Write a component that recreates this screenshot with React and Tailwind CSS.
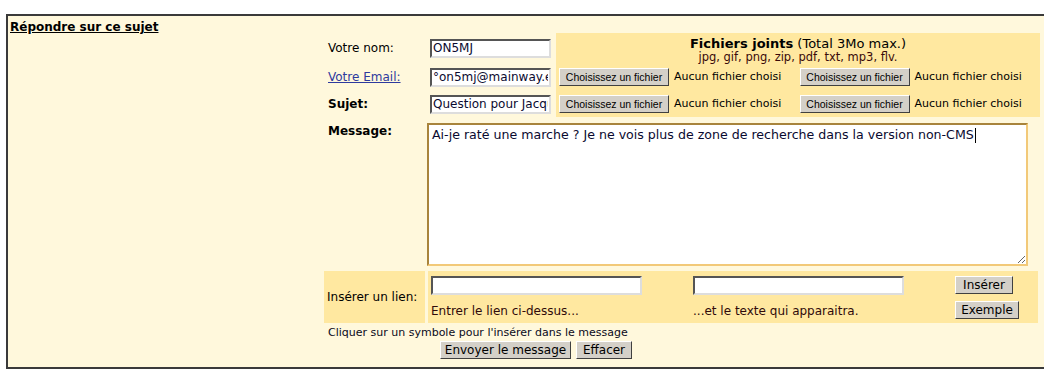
import { useState } from "react";

const fileRows = [0, 1];

function Btn({ children, className = "" }) {
  return (
    <button
      type="button"
      className={`flex h-[18px] items-center justify-center border border-t-white border-l-white border-b-[#404040] border-r-[#404040] bg-[#d4d0c8] text-[12px] leading-none text-black ${className}`}
    >
      {children}
    </button>
  );
}

function FileInput() {
  return (
    <div className="flex w-[241px] items-center gap-[5px]">
      <button
        type="button"
        className="flex h-[18px] w-[110px] items-center justify-center border border-t-white border-l-white border-b-[#404040] border-r-[#404040] bg-[#d4d0c8] font-['Liberation_Sans',Arial,sans-serif] text-[10.5px] leading-none text-black"
      >
        Choisissez un fichier
      </button>
      <span className="text-[11px] text-black">Aucun fichier choisi</span>
    </div>
  );
}

function TextBox({ value, className = "" }) {
  return (
    <input
      type="text"
      defaultValue={value}
      className={`border-2 border-t-[#555] border-l-[#555] border-b-[#ddd] border-r-[#ddd] bg-white px-[1px] text-[12px] text-[#0a0a30] outline-none ${className}`}
    />
  );
}

export default function App() {
  const [message] = useState(
    "Ai-je raté une marche ? Je ne vois plus de zone de recherche dans la version non-CMS"
  );

  return (
    <div className="h-[378px] w-[1044px] overflow-hidden bg-white pt-[14px] font-['DejaVu_Sans',Verdana,sans-serif] text-black">
      <div className="ml-[6px] h-[355px] w-[1060px] border-2 border-[#3a3a3a] bg-[#fff8dc] pl-[2px] pt-[5px]">
        <h2 className="text-[12px] leading-[12px] font-bold underline">Répondre sur ce sujet</h2>

        <div className="ml-[314px] w-[716px]">
          {/* identity + attachments */}
          <div className="flex">
            <div className="w-[232px]">
              <div className="flex h-[30px] items-center">
                <span className="w-[106px] pl-[4px] text-[12px]">Votre nom:</span>
                <TextBox value="ON5MJ" className="h-[19px] w-[121px]" />
              </div>
              <div className="flex h-[28px] items-center">
                <a href="#" className="w-[106px] pl-[4px] text-[12px] text-[#2e3a9e] underline">
                  Votre Email:
                </a>
                <TextBox value="°on5mj@mainway.eu" className="h-[19px] w-[121px]" />
              </div>
              <div className="flex h-[26px] items-center">
                <span className="w-[106px] pl-[4px] text-[12px] font-bold">Sujet:</span>
                <TextBox value="Question pour Jacques" className="h-[19px] w-[121px]" />
              </div>
            </div>

            <div className="h-[84px] w-[484px] bg-[#ffe8a0]">
              <div className="flex h-[30px] flex-col items-center pt-[3px]">
                <p className="text-[13px] leading-[15px]">
                  <span className="font-bold">Fichiers joints</span> (Total 3Mo max.)
                </p>
                <p className="text-[11.5px] leading-[12px] text-[#3a0a0a]">
                  jpg, gif, png, zip, pdf, txt, mp3, flv.
                </p>
              </div>
              {fileRows.map((row) => (
                <div
                  key={row}
                  className={`flex items-center pl-[3px] ${row === 0 ? "h-[28px]" : "h-[26px]"}`}
                >
                  <FileInput />
                  <FileInput />
                </div>
              ))}
            </div>
          </div>

          {/* message */}
          <div className="mt-[3px] flex h-[148px]">
            <span className="w-[103px] pl-[4px] pt-[4px] text-[12px] leading-[15px] font-bold">Message:</span>
            <div className="relative mt-[3px]">
              <textarea
                defaultValue={message}
                className="block h-[143px] w-[601px] border-2 border-t-[#a8843c] border-l-[#a8843c] border-b-[#f2c978] border-r-[#f2c978] bg-white px-[3px] py-[2px] text-[12.6px] leading-[16px] text-[#0a0a30] outline-none"
              />
              <span className="absolute left-[548px] top-[5px] h-[15px] w-px bg-black" />
            </div>
          </div>

          {/* link */}
          <div className="mt-[3px] flex h-[52px] gap-[3px]">
            <div className="flex w-[101px] items-center bg-[#ffe8a0] pl-[3px] text-[12px]">
              Insérer un lien:
            </div>
            <div className="grid w-[610px] grid-cols-[262px_262px_auto] grid-rows-[19px_19px] gap-y-[6px] bg-[#ffe8a0] pl-[3px] pt-[5px]">
              <TextBox className="h-[19px] w-[211px]" />
              <TextBox className="h-[19px] w-[211px]" />
              <Btn className="w-[58px]">Insérer</Btn>
              <span className="flex items-center text-[12px] text-[#300a0a]">Entrer le lien ci-dessus...</span>
              <span className="flex items-center text-[12px] text-[#300a0a]">...et le texte qui apparaitra.</span>
              <Btn className="w-[64px]">Exemple</Btn>
            </div>
          </div>

          <p className="mt-[4px] pl-[4px] text-[11px] leading-[12px] text-[#0a0a20]">
            Cliquer sur un symbole pour l'insérer dans le message
          </p>
          <div className="ml-[116px] mt-[2px] flex gap-[5px]">
            <Btn className="w-[131px]">Envoyer le message</Btn>
            <Btn className="w-[56px]">Effacer</Btn>
          </div>
        </div>
      </div>
    </div>
  );
}
